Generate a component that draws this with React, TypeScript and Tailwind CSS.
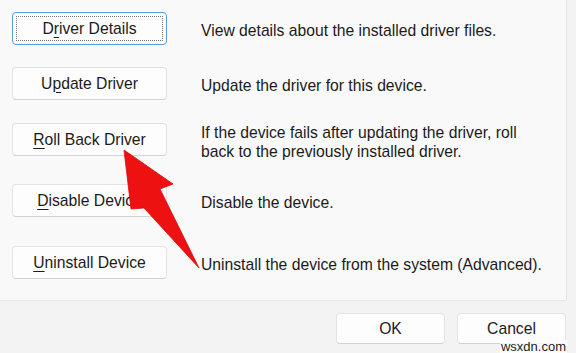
const font = { fontFamily: '"Liberation Sans", Arial, sans-serif' };

function Btn({ children, focused }: { children: React.ReactNode; focused?: boolean }) {
  return (
    <div
      className={
        "w-[155px] h-[33px] shrink-0 rounded-[4px] bg-[#fdfdfd] flex items-center justify-center text-[15.7px] text-[#1b1b1b] " +
        (focused ? "border border-[#5b9bd8] p-[3px]" : "border border-[#e3e3e3] border-b-[#d2d2d2]")
      }
    >
      {focused ? (
        <div className="w-full h-full border border-dotted border-[#777] flex items-center justify-center">
          {children}
        </div>
      ) : (
        children
      )}
    </div>
  );
}

function U({ children }: { children: React.ReactNode }) {
  return <span className="underline underline-offset-[3px] decoration-1">{children}</span>;
}

export default function App() {
  const rows = [
    { mt: "mt-[11px]", btn: <>D<U>r</U>iver Details</>, desc: "View details about the installed driver files.", focused: true },
    { mt: "mt-[22px]", btn: <>U<U>p</U>date Driver</>, desc: "Update the driver for this device." },
    { mt: "mt-[23px]", btn: <><U>R</U>oll Back Driver</>, desc: "If the device fails after updating the driver, roll back to the previously installed driver." },
    { mt: "mt-[28px]", btn: <><U>D</U>isable Device</>, desc: "Disable the device." },
    { mt: "mt-[29px]", btn: <><U>U</U>ninstall Device</>, desc: "Uninstall the device from the system (Advanced)." },
  ];
  return (
    <div className="relative w-[576px] h-[353px] bg-[#f3f3f3] overflow-hidden" style={font}>
      <div className="w-[567px] h-[301px] bg-[#f9f9f9] border-r border-b border-[#e6e6e6] pl-[12px] pt-px">
        {rows.map((r, i) => (
          <div key={i} className={"flex items-center h-[33px] " + r.mt}>
            <Btn focused={r.focused}>{r.btn}</Btn>
            <div
              className={
                "ml-[34px] mt-[4px] text-[15.7px] leading-[19px] text-[#1b1b1b] " +
                (i === 2 ? "w-[325px]" : "whitespace-nowrap")
              }
            >
              {r.desc}
            </div>
          </div>
        ))}
      </div>
      <div className="flex justify-end gap-[12px] pr-[10px] pt-[12px]">
        <div className="w-[109px] h-[31px] rounded-[4px] bg-[#fdfdfd] border border-[#e3e3e3] border-b-[#d2d2d2] flex items-center justify-center text-[15.7px] text-[#1b1b1b]">OK</div>
        <div className="w-[109px] h-[31px] rounded-[4px] bg-[#fdfdfd] border border-[#e3e3e3] border-b-[#d2d2d2] flex items-center justify-center text-[15.7px] text-[#1b1b1b]">Cancel</div>
      </div>
      <svg className="absolute left-0 top-0" width="576" height="353" viewBox="0 0 576 353">
        <polygon
          points="124,150 173,184 160,189 199,268 144,208 131,209"
          fill="#ee1111"
          stroke="#d80a0a"
          strokeWidth="0.8"
          strokeLinejoin="round"
        />
      </svg>
      <div className="absolute right-[9px] bottom-0 text-[13px] leading-[13px] text-[#222] bg-white/70 px-[1px]">
        wsxdn.com
      </div>
    </div>
  );
}
